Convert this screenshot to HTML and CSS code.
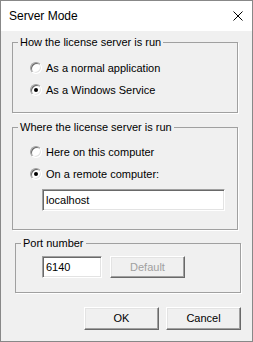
FILE: index.html
```html
<!DOCTYPE html>
<html lang="en">
<head>
    <meta charset="UTF-8">
    <meta name="viewport" content="width=device-width, initial-scale=1.0">
    <title>Server Mode</title>
    <link rel="stylesheet" href="styles.css">
</head>
<body>
    <div class="window">
        <!-- Title bar -->
        <div class="titlebar">
            <span class="title">Server Mode</span>
            <svg class="close" width="10" height="10" viewBox="0 0 10 10">
                <path d="M0.5 0.5 L9.5 9.5 M9.5 0.5 L0.5 9.5" stroke="#000" stroke-width="1" fill="none"/>
            </svg>
        </div>

        <div class="client">
            <!-- How -->
            <fieldset class="group group-how">
                <legend>How the license server is run</legend>
                <label class="option"><span class="radio"></span>As a normal application</label>
                <label class="option"><span class="radio checked"></span>As a Windows Service</label>
            </fieldset>

            <!-- Where -->
            <fieldset class="group group-where">
                <legend>Where the license server is run</legend>
                <label class="option"><span class="radio"></span>Here on this computer</label>
                <label class="option"><span class="radio checked"></span>On a remote computer:</label>
                <div class="textbox host">localhost</div>
            </fieldset>

            <!-- Port -->
            <fieldset class="group group-port">
                <legend>Port number</legend>
                <div class="port-row">
                    <div class="textbox port">6140</div>
                    <button class="btn disabled">Default</button>
                </div>
            </fieldset>

            <div class="actions">
                <button class="btn">OK</button>
                <button class="btn">Cancel</button>
            </div>
        </div>
    </div>
</body>
</html>
```

FILE: styles.css
```css
* {
    margin: 0;
    padding: 0;
    box-sizing: border-box;
}

body {
    font-family: 'Liberation Sans', Arial, sans-serif;
    font-size: 11px;
    line-height: 13px;
    color: #000;
    background: #f0f0f0;
}

.window {
    width: 253px;
    height: 342px;
    border: 1px solid #888888;
    background: #f0f0f0;
    display: flex;
    flex-direction: column;
}

/* Title bar */
.titlebar {
    height: 30px;
    background: #ffffff;
    display: flex;
    align-items: center;
    justify-content: space-between;
    padding: 0 9px 0 8px;
}

.title {
    font-size: 12px;
}

.close {
    display: block;
}

/* Client area */
.client {
    flex: 1;
    padding: 5px 11px 0 11px;
    display: flex;
    flex-direction: column;
}

/* Group boxes */
.group {
    width: 226px;
    border: 1px solid #a0a0a0;
    box-shadow: 1px 1px 0 #ffffff;
    padding: 8px 0 11px 5px;
}

.group legend {
    padding: 0 2px;
    line-height: 13px;
    background: #f0f0f0;
}

.group-where {
    margin-top: 8px;
    padding: 7px 0 18px 5px;
}

.group-port {
    margin-top: 7px;
    margin-left: 3px;
    padding: 6px 0 14px 5px;
}

.option {
    height: 22px;
    display: flex;
    align-items: center;
    gap: 4px;
    padding-left: 12px;
}

/* Radio buttons */
.radio {
    width: 12px;
    height: 12px;
    flex: none;
    border-radius: 50%;
    background: #ffffff;
    border: 1px solid;
    border-color: #a0a0a0 #ffffff #ffffff #a0a0a0;
    box-shadow: inset 1px 1px 0 #696969, inset -1px -1px 0 #e3e3e3;
    display: grid;
    place-items: center;
}

.radio.checked::after {
    content: '';
    width: 4px;
    height: 4px;
    border-radius: 50%;
    background: #000000;
}

/* Text boxes */
.textbox {
    height: 22px;
    background: #ffffff;
    border: 1px solid;
    border-color: #a0a0a0 #ffffff #ffffff #a0a0a0;
    box-shadow: inset 1px 1px 0 #696969, inset -1px -1px 0 #e3e3e3;
    padding: 4px 3px 0;
}

.host {
    width: 183px;
    margin: 4px 0 0 24px;
}

.port-row {
    display: flex;
    gap: 8px;
    padding-left: 21px;
}

.port {
    width: 60px;
}

/* Buttons */
.btn {
    width: 75px;
    height: 22px;
    font: inherit;
    color: #000000;
    background: #f0f0f0;
    border: 1px solid;
    border-color: #ffffff #696969 #696969 #ffffff;
    box-shadow: inset -1px -1px 0 #a0a0a0, inset 1px 1px 0 #e3e3e3;
}

.btn.disabled {
    color: #a0a0a0;
}

.actions {
    margin-top: 14px;
    display: flex;
    justify-content: flex-end;
    gap: 7px;
    height: 23px;
}

.actions .btn {
    height: 23px;
}
```
